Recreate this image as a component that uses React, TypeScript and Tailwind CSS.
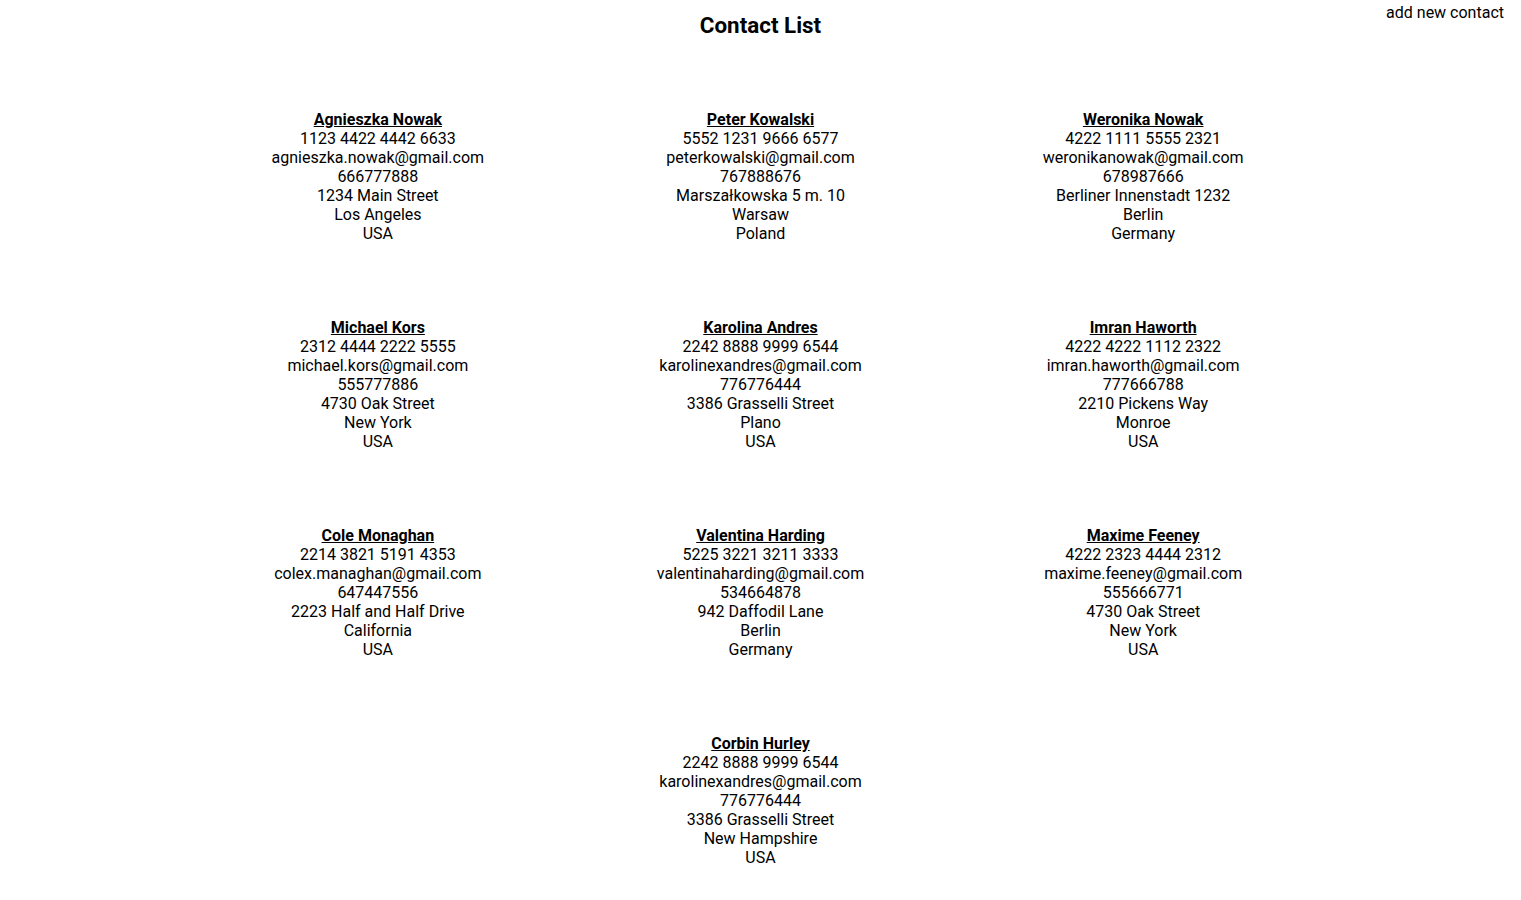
const contacts = [
  { name: "Agnieszka Nowak", card: "1123 4422 4442 6633", email: "agnieszka.nowak@gmail.com", phone: "666777888", street: "1234 Main Street", city: "Los Angeles", country: "USA" },
  { name: "Peter Kowalski", card: "5552 1231 9666 6577", email: "peterkowalski@gmail.com", phone: "767888676", street: "Marszałkowska 5 m. 10", city: "Warsaw", country: "Poland" },
  { name: "Weronika Nowak", card: "4222 1111 5555 2321", email: "weronikanowak@gmail.com", phone: "678987666", street: "Berliner Innenstadt 1232", city: "Berlin", country: "Germany" },
  { name: "Michael Kors", card: "2312 4444 2222 5555", email: "michael.kors@gmail.com", phone: "555777886", street: "4730 Oak Street", city: "New York", country: "USA" },
  { name: "Karolina Andres", card: "2242 8888 9999 6544", email: "karolinexandres@gmail.com", phone: "776776444", street: "3386 Grasselli Street", city: "Plano", country: "USA" },
  { name: "Imran Haworth", card: "4222 4222 1112 2322", email: "imran.haworth@gmail.com", phone: "777666788", street: "2210 Pickens Way", city: "Monroe", country: "USA" },
  { name: "Cole Monaghan", card: "2214 3821 5191 4353", email: "colex.managhan@gmail.com", phone: "647447556", street: "2223 Half and Half Drive", city: "California", country: "USA" },
  { name: "Valentina Harding", card: "5225 3221 3211 3333", email: "valentinaharding@gmail.com", phone: "534664878", street: "942 Daffodil Lane", city: "Berlin", country: "Germany" },
  { name: "Maxime Feeney", card: "4222 2323 4444 2312", email: "maxime.feeney@gmail.com", phone: "555666771", street: "4730 Oak Street", city: "New York", country: "USA" },
  { name: "Corbin Hurley", card: "2242 8888 9999 6544", email: "karolinexandres@gmail.com", phone: "776776444", street: "3386 Grasselli Street", city: "New Hampshire", country: "USA" },
]

const App = () => {
  return (
    <div className="min-h-screen bg-white text-black font-['Roboto',sans-serif]">
      {/* header */}
      <header className="grid grid-cols-[1fr_auto_1fr]">
        <div />
        <h1 className="pt-[12px] text-[22.4px] leading-[26px] font-bold text-center">Contact List</h1>
        <a href="#" className="justify-self-end self-start pt-[3px] pr-[17px] text-base leading-[19px]">
          add new contact
        </a>
      </header>
      {/* list */}
      <div className="w-[1148px] mx-auto mt-[72px] flex flex-wrap justify-center gap-y-[75px]">
        {contacts.map((c, i) => (
          <div key={i} className="w-1/3 flex flex-col items-center text-center text-base leading-[19px]">
            <a href="#" className="font-bold underline">{c.name}</a>
            <p>{c.card}</p>
            <p>{c.email}</p>
            <p>{c.phone}</p>
            <p>{c.street}</p>
            <p>{c.city}</p>
            <p>{c.country}</p>
          </div>
        ))}
      </div>
    </div>
  )
}

export default App
